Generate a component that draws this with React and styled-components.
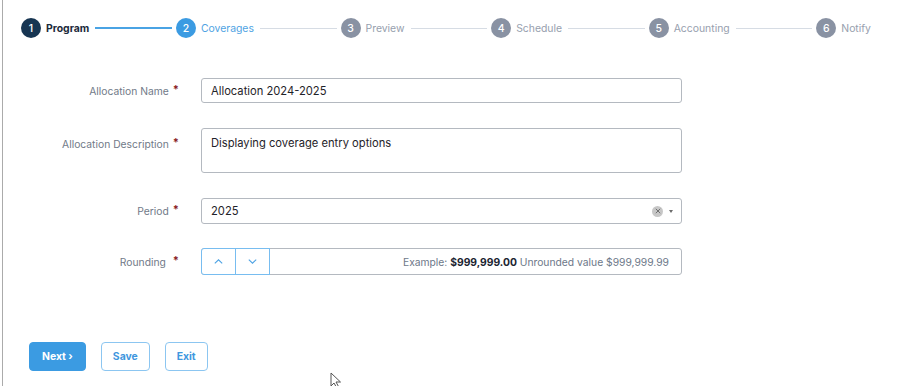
import React from 'react'
import styled, {createGlobalStyle} from 'styled-components'

const GlobalStyle = createGlobalStyle`
  html, body {
    margin: 0;
    padding: 0;
    background: #fff;
  }
  body {
    font-family: Inter, 'Noto Sans', 'Liberation Sans', sans-serif;
    color: #1f2937;
  }
`

const steps = ['Program', 'Coverages', 'Preview', 'Schedule', 'Accounting', 'Notify']
const currentStep = 1

export default function App() {
  return (
    <Page>
      <GlobalStyle />
      <Stepper>
        {steps.map((name, i) => {
          const state = i < currentStep ? 'done' : i === currentStep ? 'active' : 'todo'
          return (
            <React.Fragment key={name}>
              {i > 0 && <StepLine $filled={i <= currentStep} />}
              <Step>
                <StepDot $state={state}>{i + 1}</StepDot>
                <StepName $state={state}>{name}</StepName>
              </Step>
            </React.Fragment>
          )
        })}
      </Stepper>

      <Form>
        <Label>Allocation Name<Req>*</Req></Label>
        <TextInput defaultValue='Allocation 2024-2025' />

        <Label $top={true}>Allocation Description<Req>*</Req></Label>
        <TextArea defaultValue='Displaying coverage entry options' />

        <Label>Period<Req>*</Req></Label>
        <SelectBox>
          <span>2025</span>
          <SelectIcons>
            <ClearBtn>
              <svg width='6' height='6' viewBox='0 0 6 6'>
                <path d='M0.8 0.8 L5.2 5.2 M5.2 0.8 L0.8 5.2' stroke='#6f6f6f' strokeWidth='1' />
              </svg>
            </ClearBtn>
            <Caret />
          </SelectIcons>
        </SelectBox>

        <Label>Rounding<Gap /><Req>*</Req></Label>
        <RoundingBox>
          <StepBtn>
            <svg width='9' height='5' viewBox='0 0 9 5'>
              <path d='M0.8 4.4 L4.5 0.8 L8.2 4.4' fill='none' stroke='#4ea3e4' strokeWidth='1.1' />
            </svg>
          </StepBtn>
          <StepBtn>
            <svg width='9' height='5' viewBox='0 0 9 5'>
              <path d='M0.8 0.6 L4.5 4.2 L8.2 0.6' fill='none' stroke='#4ea3e4' strokeWidth='1.1' />
            </svg>
          </StepBtn>
          <Example>
            Example: <strong>$999,999.00</strong> Unrounded value $999,999.99
          </Example>
        </RoundingBox>
      </Form>

      <Actions>
        <Button $primary={true}>Next ›</Button>
        <Button>Save</Button>
        <Button>Exit</Button>
      </Actions>

      <Pointer width='16' height='16' viewBox='0 0 16 16'>
        <path d='M1 1 L1 14 L4 11 L6.5 15.5 L8.5 14.5 L6 10 L10.5 10 Z' fill='#fff' stroke='#555' strokeWidth='1' />
      </Pointer>
    </Page>
  )
}

const Page = styled('div')`
  position: relative;
  margin-left: 2px;
  border-left: 1px solid #ababab;
  height: 386px;
  box-sizing: border-box;
  padding: 18px 0 0 18px;
  overflow: hidden;
`

const Stepper = styled('div')`
  display: flex;
  align-items: center;
  width: 850px;
  height: 20px;
`

const Step = styled('div')`
  display: flex;
  align-items: center;
  gap: 5px;
`

const StepDot = styled('span')`
  width: 20px;
  height: 20px;
  border-radius: 50%;
  display: flex;
  align-items: center;
  justify-content: center;
  font-size: 10.5px;
  font-weight: 500;
  color: #fff;
  background: ${p => p.$state === 'done' ? '#173552' : p.$state === 'active' ? '#3b9be2' : '#8992a3'};
`

const StepName = styled('span')`
  font-size: 10.4px;
  font-weight: ${p => p.$state === 'done' ? 700 : 400};
  color: ${p => p.$state === 'done' ? '#1b2a3a' : p.$state === 'active' ? '#4fa3e3' : '#97a0ae'};
`

const StepLine = styled('div')`
  flex: 1;
  height: ${p => p.$filled ? '2px' : '1px'};
  background: ${p => p.$filled ? '#4aa3e4' : '#d6dce4'};
  margin: 0 4px 0 6px;
`

const Form = styled('div')`
  display: grid;
  grid-template-columns: 160px 481px;
  column-gap: 20px;
  row-gap: 25px;
  margin-top: 40px;
  align-items: center;
`

const Label = styled('div')`
  text-align: right;
  font-size: 10.3px;
  color: #717a88;
  align-self: ${p => p.$top ? 'start' : 'center'};
  padding-top: ${p => p.$top ? '9px' : '0'};
  padding-right: 2px;
  white-space: nowrap;
`

const Req = styled('span')`
  color: #8a1c24;
  font-weight: 700;
  font-size: 11px;
  margin-left: 4px;
  position: relative;
  top: -2px;
`

const Gap = styled('span')`
  display: inline-block;
  width: 3px;
`

const TextInput = styled('input')`
  box-sizing: border-box;
  height: 25px;
  width: 100%;
  border: 1px solid #b4b9c0;
  border-radius: 3px;
  padding: 0 9px;
  font-family: inherit;
  font-size: 11.2px;
  color: #1f2329;
  outline: none;
`

const TextArea = styled('textarea')`
  box-sizing: border-box;
  height: 45px;
  width: 100%;
  border: 1px solid #b4b9c0;
  border-radius: 3px;
  padding: 7px 9px;
  font-family: inherit;
  font-size: 11.2px;
  color: #1f2329;
  resize: none;
  outline: none;
  display: block;
`

const SelectBox = styled('div')`
  box-sizing: border-box;
  height: 26px;
  border: 1px solid #b4b9c0;
  border-radius: 3px;
  padding: 0 8px 0 9px;
  display: flex;
  align-items: center;
  justify-content: space-between;
  font-size: 11.2px;
  color: #1f2329;
`

const SelectIcons = styled('div')`
  display: flex;
  align-items: center;
  gap: 6px;
`

const ClearBtn = styled('span')`
  width: 11px;
  height: 11px;
  border-radius: 50%;
  background: #c7c7c7;
  display: flex;
  align-items: center;
  justify-content: center;
`

const Caret = styled('span')`
  width: 0;
  height: 0;
  border-left: 2.5px solid transparent;
  border-right: 2.5px solid transparent;
  border-top: 3px solid #6b6b6b;
`

const RoundingBox = styled('div')`
  box-sizing: border-box;
  height: 27px;
  margin-top: -1px;
  display: flex;
  border: 1px solid #b4b9c0;
  border-radius: 3px;
`

const StepBtn = styled('button')`
  width: 35px;
  margin: -1px 0 -1px -1px;
  background: #fff;
  border: 1px solid #78bdf0;
  display: flex;
  align-items: center;
  justify-content: center;
  padding: 0;
  &:first-child {
    border-radius: 3px 0 0 3px;
  }
`

const Example = styled('div')`
  flex: 1;
  display: flex;
  align-items: center;
  justify-content: flex-end;
  padding-right: 12px;
  font-size: 10.3px;
  color: #6d7889;
  white-space: pre;
  & strong {
    color: #1b2431;
    font-weight: 700;
  }
`

const Actions = styled('div')`
  display: flex;
  gap: 15px;
  margin-top: 67px;
  padding-left: 8px;
`

const Button = styled('button')`
  height: 29px;
  padding: 0 ${p => p.$primary ? '12px' : '11px'};
  border-radius: 4px;
  font-family: inherit;
  font-size: 10.4px;
  font-weight: 700;
  border: 1px solid ${p => p.$primary ? '#3b9be2' : '#8cc6f1'};
  background: ${p => p.$primary ? '#3b9be2' : '#fff'};
  color: ${p => p.$primary ? '#fff' : '#3f97de'};
`

const Pointer = styled('svg')`
  position: absolute;
  left: 327px;
  top: 372px;
`
